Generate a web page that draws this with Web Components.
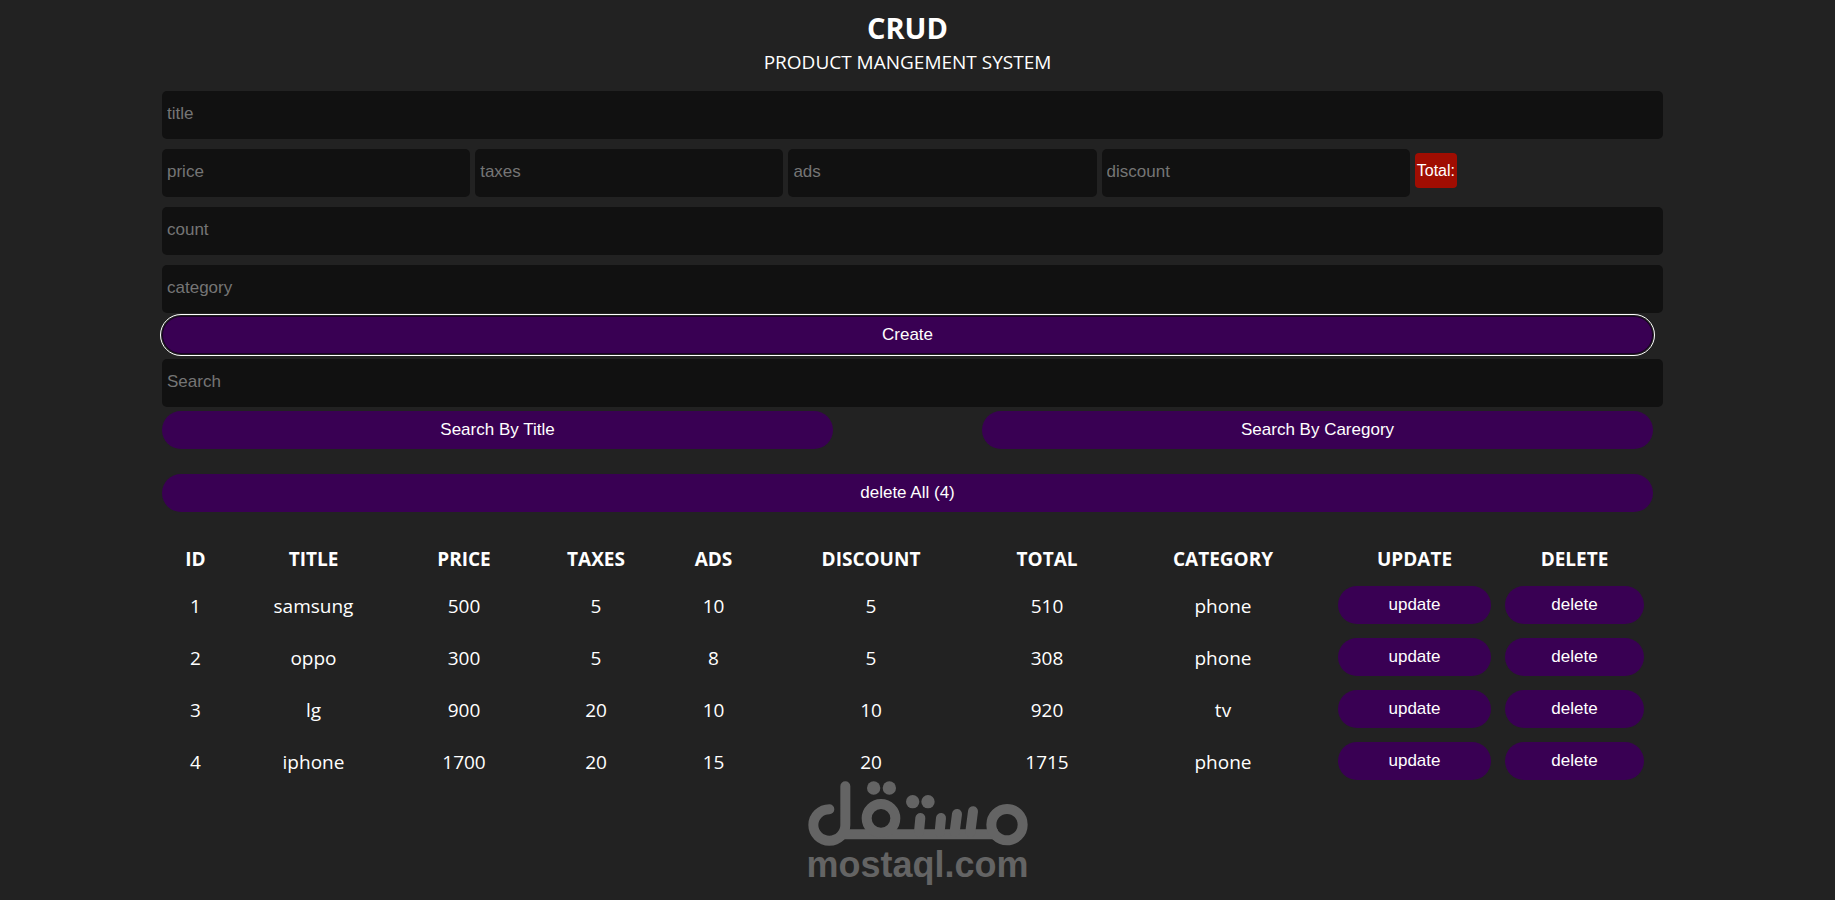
<!DOCTYPE html>
<html lang="en">
<head>
    <meta charset="UTF-8">
    <meta name="viewport" content="width=device-width, initial-scale=1.0">
    <title>CRUD</title>
    <style>
        :root {
            --crud-bg: #222;
            --crud-field: #111;
            --crud-main: #390053;
            --crud-total: #a00d02;
            --crud-mark: #646464;
        }

        body {
            margin: 0;
            min-height: 100vh;
            background: var(--crud-bg);
            color: #fff;
            font-family: 'Open Sans', 'Noto Sans', sans-serif;
        }
    </style>
</head>
<body>
    <crud-app></crud-app>

    <script>
        class CrudHeader extends HTMLElement {
            constructor() {
                super();
                this.shadow = this.attachShadow({ mode: 'open' });
            }

            connectedCallback() {
                this.shadow.innerHTML = `
                    <style>
                        :host {
                            display: block;
                            text-align: center;
                            text-transform: uppercase;
                        }

                        h1 {
                            margin: 0;
                            font-size: 29px;
                            line-height: 36px;
                        }

                        p {
                            margin: 0;
                            font-size: 19px;
                            line-height: 32px;
                        }
                    </style>

                    <h1><slot name="title"></slot></h1>
                    <p><slot></slot></p>
                `;
            }
        }

        class CrudField extends HTMLElement {
            constructor() {
                super();
                this.shadow = this.attachShadow({ mode: 'open' });
            }

            connectedCallback() {
                const name = this.getAttribute('name');
                const type = this.getAttribute('type') || 'text';

                this.shadow.innerHTML = `
                    <style>
                        :host {
                            display: block;
                        }

                        input {
                            display: block;
                            box-sizing: border-box;
                            width: 100%;
                            height: 48px;
                            padding: 0 5px 2px;
                            border: none;
                            border-radius: 5px;
                            outline: none;
                            background: var(--crud-field);
                            color: #fff;
                            font-family: 'Liberation Sans', Arial, sans-serif;
                            font-size: 17px;
                        }

                        input::placeholder {
                            color: #757575;
                        }
                    </style>

                    <input type="${type}" placeholder="${name}" aria-label="${name}">
                `;
            }
        }

        class CrudButton extends HTMLElement {
            constructor() {
                super();
                this.shadow = this.attachShadow({ mode: 'open' });
            }

            connectedCallback() {
                this.shadow.innerHTML = `
                    <style>
                        :host {
                            display: block;
                        }

                        button {
                            display: block;
                            width: 100%;
                            height: 38px;
                            padding: 0 0 1px;
                            border: none;
                            border-radius: 20px;
                            background: var(--crud-main);
                            color: #fff;
                            font-family: 'Liberation Sans', Arial, sans-serif;
                            font-size: 17px;
                            cursor: pointer;
                        }

                        :host([active]) button {
                            border: 1px solid #180024;
                            outline: 1px solid #fff;
                            outline-offset: 1px;
                        }
                    </style>

                    <button type="button"><slot></slot></button>
                `;
            }
        }

        class CrudForm extends HTMLElement {
            constructor() {
                super();
                this.shadow = this.attachShadow({ mode: 'open' });
            }

            connectedCallback() {
                this.shadow.innerHTML = `
                    <style>
                        :host {
                            display: block;
                        }

                        /* fields run 10px past the buttons on the right */
                        .fields {
                            display: grid;
                            gap: 10px;
                            margin-right: -10px;
                        }

                        .price {
                            display: flex;
                            align-items: flex-start;
                            gap: 5px;
                        }

                        .price crud-field {
                            width: calc(20% + 8px);
                        }

                        output {
                            margin-top: 4px;
                            padding: 0 2px;
                            border-radius: 4px;
                            background: var(--crud-total);
                            font-family: 'Liberation Sans', Arial, sans-serif;
                            font-size: 16px;
                            line-height: 35px;
                        }

                        .create {
                            margin: 3px 0 5px;
                        }

                        .search {
                            margin-right: -10px;
                        }

                        .search-by {
                            display: flex;
                            justify-content: space-between;
                            margin: 4px 0 25px;
                        }

                        .search-by crud-button {
                            width: 45%;
                        }
                    </style>

                    <div class="fields">
                        <crud-field name="title"></crud-field>
                        <div class="price">
                            <crud-field name="price" type="number"></crud-field>
                            <crud-field name="taxes" type="number"></crud-field>
                            <crud-field name="ads" type="number"></crud-field>
                            <crud-field name="discount" type="number"></crud-field>
                            <output>Total:</output>
                        </div>
                        <crud-field name="count" type="number"></crud-field>
                        <crud-field name="category"></crud-field>
                    </div>
                    <crud-button class="create" active>Create</crud-button>
                    <crud-field class="search" name="Search"></crud-field>
                    <div class="search-by">
                        <crud-button>Search By Title</crud-button>
                        <crud-button>Search By Caregory</crud-button>
                    </div>
                    <crud-button>delete All (4)</crud-button>
                `;
            }
        }

        const products = [
            ['samsung', 500, 5, 10, 5, 510, 'phone'],
            ['oppo', 300, 5, 8, 5, 308, 'phone'],
            ['lg', 900, 20, 10, 10, 920, 'tv'],
            ['iphone', 1700, 20, 15, 20, 1715, 'phone']
        ];

        const columns = [
            ['id', 63],
            ['title', 173],
            ['price', 128],
            ['taxes', 136],
            ['ads', 99],
            ['discount', 216],
            ['total', 136],
            ['category', 216],
            ['update', 167],
            ['delete', 153]
        ];

        class CrudTable extends HTMLElement {
            constructor() {
                super();
                this.shadow = this.attachShadow({ mode: 'open' });
            }

            connectedCallback() {
                const cols = columns.map(([, width]) => `<col style="width: ${width}px">`).join('');
                const heads = columns.map(([name]) => `<th scope="col">${name}</th>`).join('');
                const rows = products.map((product, i) => `
                    <tr>
                        <td>${i + 1}</td>
                        ${product.map(value => `<td>${value}</td>`).join('')}
                        <td class="action"><crud-button>update</crud-button></td>
                        <td class="action"><crud-button>delete</crud-button></td>
                    </tr>
                `).join('');

                this.shadow.innerHTML = `
                    <style>
                        :host {
                            display: block;
                            padding: 0 2px;
                        }

                        table {
                            width: 100%;
                            table-layout: fixed;
                            border-collapse: collapse;
                            text-align: center;
                            font-size: 19px;
                            line-height: 26px;
                        }

                        th {
                            height: 40px;
                            padding: 0;
                            text-transform: uppercase;
                        }

                        td {
                            padding: 8px 7px 6px;
                        }

                        .action {
                            padding: 7px;
                        }
                    </style>

                    <table>
                        <colgroup>${cols}</colgroup>
                        <thead><tr>${heads}</tr></thead>
                        <tbody>${rows}</tbody>
                    </table>
                `;
            }
        }

        class CrudWatermark extends HTMLElement {
            constructor() {
                super();
                this.shadow = this.attachShadow({ mode: 'open' });
            }

            connectedCallback() {
                this.shadow.innerHTML = `
                    <style>
                        :host {
                            position: absolute;
                            right: 0;
                            bottom: 18px;
                            left: 0;
                            color: var(--crud-mark);
                            text-align: center;
                            pointer-events: none;
                        }

                        svg {
                            display: block;
                            width: 220px;
                            height: 66px;
                            margin: 0 auto;
                        }

                        span {
                            display: block;
                            font: bold 36px/35px 'Liberation Sans', Arial, sans-serif;
                        }
                    </style>

                    <svg viewBox="51 32 660 198" fill="none" stroke="currentColor" stroke-width="30" stroke-linecap="round" aria-hidden="true">
                        <path d="M115 117A48 47 0 1 0 163 164V48"/>
                        <path d="M150 192H620" stroke-linecap="butt"/>
                        <circle cx="270" cy="144" r="43"/>
                        <circle cx="648" cy="163" r="47"/>
                        <path d="M388 143L384 185M450 143L446 185M498 131L491 185M546 123L538 185"/>
                        <g fill="currentColor" stroke="none">
                            <circle cx="248" cy="53" r="20"/>
                            <circle cx="295" cy="53" r="20"/>
                            <circle cx="365" cy="94" r="20"/>
                            <circle cx="411" cy="94" r="20"/>
                        </g>
                    </svg>
                    <span>mostaql.com</span>
                `;
            }
        }

        class CrudApp extends HTMLElement {
            constructor() {
                super();
                this.shadow = this.attachShadow({ mode: 'open' });
            }

            connectedCallback() {
                this.shadow.innerHTML = `
                    <style>
                        :host {
                            display: block;
                            position: relative;
                            box-sizing: border-box;
                            min-height: 100vh;
                            padding: 10px 182px 0 162px;
                        }

                        crud-form {
                            margin: 13px 0 27px;
                        }
                    </style>

                    <crud-header><span slot="title">crud</span>product mangement system</crud-header>
                    <crud-form></crud-form>
                    <crud-table></crud-table>
                    <crud-watermark></crud-watermark>
                `;
            }
        }

        customElements.define('crud-header', CrudHeader);
        customElements.define('crud-field', CrudField);
        customElements.define('crud-button', CrudButton);
        customElements.define('crud-form', CrudForm);
        customElements.define('crud-table', CrudTable);
        customElements.define('crud-watermark', CrudWatermark);
        customElements.define('crud-app', CrudApp);
    </script>
</body>
</html>
